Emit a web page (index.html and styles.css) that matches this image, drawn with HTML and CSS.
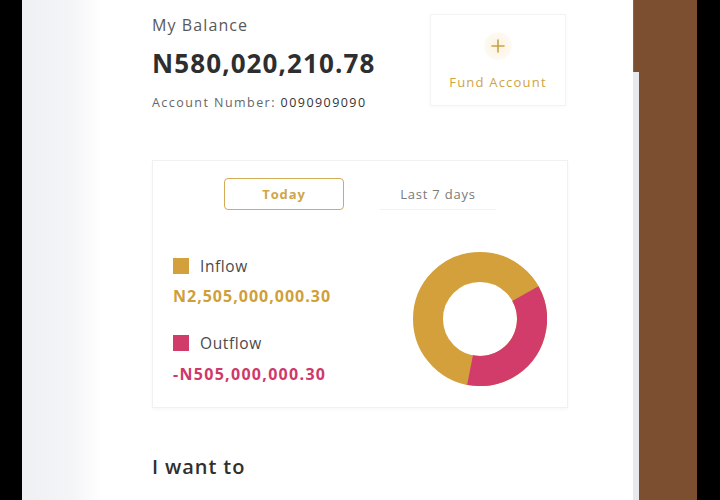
FILE: index.html
```html
<!DOCTYPE html>
<html lang="en">
<head>
<meta charset="utf-8">
<title>Dashboard</title>
<link rel="stylesheet" href="styles.css">
</head>
<body>
<div class="frame">
  <div class="bezel-left"></div>
  <div class="screen">
    <div class="screen-main">
      <div class="balance-row">
        <div class="balance-info">
          <div class="balance-label">My Balance</div>
          <div class="balance-amount">N580,020,210.78</div>
          <div class="account">Account Number: <span class="account-no">0090909090</span></div>
        </div>
        <div class="fund-card">
          <div class="fund-icon">
            <svg width="14" height="14" viewBox="0 0 14 14"><path d="M7 1v12M1 7h12" stroke="#c9a24a" stroke-width="1.6" stroke-linecap="round"/></svg>
          </div>
          <div class="fund-label">Fund Account</div>
        </div>
      </div>

      <div class="chart-card">
        <div class="tabs">
          <div class="tab tab-active">Today</div>
          <div class="tab">Last 7 days</div>
        </div>
        <div class="chart-body">
          <div class="legend">
            <div class="legend-item">
              <span class="swatch swatch-in"></span><span class="legend-name">Inflow</span>
            </div>
            <div class="legend-amount amount-in">N2,505,000,000.30</div>
            <div class="legend-item legend-item-second">
              <span class="swatch swatch-out"></span><span class="legend-name">Outflow</span>
            </div>
            <div class="legend-amount amount-out">-N505,000,000.30</div>
          </div>
          <svg class="donut" width="134" height="134" viewBox="0 0 134 134">
            <circle cx="67" cy="67" r="52" fill="none" stroke="#d4a03b" stroke-width="30"/>
            <circle cx="67" cy="67" r="52" fill="none" stroke="#d23c6a" stroke-width="30" stroke-dasharray="118.1 400" transform="rotate(-29.3 67 67)"/>
          </svg>
        </div>
      </div>

      <div class="section-title">I want to</div>
    </div>
    <div class="screen-edge">
      <div class="edge-top"></div>
    </div>
  </div>
  <div class="bezel-right"></div>
</div>
</body>
</html>
```
FILE: styles.css
```css
html, body {
  margin: 0;
  padding: 0;
  background: #000;
}
body {
  width: 720px;
  height: 500px;
  overflow: hidden;
  font-family: "Open Sans", "Liberation Sans", sans-serif;
}
.frame {
  display: flex;
  width: 720px;
  height: 500px;
}
.bezel-left {
  width: 22px;
  flex: none;
  background: #000;
}
.screen {
  width: 617px;
  flex: none;
  display: flex;
  background: linear-gradient(to right, #eef0f3 0px, #f4f5f7 50px, #fbfbfc 68px, #ffffff 80px);
}
.screen-main {
  flex: 1;
  padding: 14px 0 0 130px;
  box-sizing: border-box;
}
.screen-edge {
  width: 6px;
  flex: none;
  background: #e7e9ec;
}
.edge-top {
  height: 72px;
  background: #7b4f2f;
  box-shadow: inset 1px 0 0 #6d6d6d;
}
.bezel-right {
  width: 58px;
  flex: none;
  background: #7b4f2f;
}

.balance-row {
  display: flex;
  width: 414px;
  height: 92px;
  justify-content: space-between;
}
.balance-info {
  padding-top: 1px;
}
.balance-label {
  font-size: 16px;
  line-height: 20px;
  color: #595959;
  letter-spacing: 1.1px;
}
.balance-amount {
  margin-top: 12px;
  font-size: 26px;
  line-height: 32px;
  font-weight: 700;
  color: #2e2e2e;
  letter-spacing: 1.1px;
}
.account {
  margin-top: 16px;
  font-size: 12.5px;
  line-height: 16px;
  color: #666;
  letter-spacing: 1.45px;
  white-space: nowrap;
}
.account-no {
  color: #333;
}
.fund-card {
  width: 136px;
  height: 92px;
  box-sizing: border-box;
  background: #fff;
  border: 1px solid #f3f3f5;
  box-shadow: 0 1px 4px rgba(0,0,0,0.03);
  display: flex;
  flex-direction: column;
  align-items: center;
}
.fund-icon {
  margin-top: 17px;
  width: 28px;
  height: 28px;
  border-radius: 50%;
  background: radial-gradient(circle, #fbf3df 0, #fdf9f0 60%, #fff 100%);
  display: flex;
  align-items: center;
  justify-content: center;
}
.fund-label {
  margin-top: 14px;
  font-size: 13px;
  line-height: 16px;
  color: #cfa443;
  letter-spacing: 1.2px;
}

.chart-card {
  margin-top: 54px;
  width: 416px;
  height: 248px;
  box-sizing: border-box;
  background: #fff;
  border: 1px solid #f1f1f4;
  box-shadow: 0 2px 4px rgba(0,0,0,0.03);
  padding-top: 17px;
}
.tabs {
  display: flex;
  justify-content: center;
  gap: 36px;
}
.tab {
  width: 116px;
  height: 32px;
  box-sizing: border-box;
  display: flex;
  align-items: center;
  justify-content: center;
  font-size: 13px;
  letter-spacing: 0.8px;
  color: #7a7a7a;
  border-bottom: 1px solid #f2f2f4;
}
.tab-active {
  width: 120px;
  border: 1.5px solid #d2ab56;
  border-radius: 4px;
  color: #d0a648;
  font-weight: 700;
  letter-spacing: 0.9px;
}
.chart-body {
  display: flex;
  justify-content: space-between;
  align-items: flex-start;
  padding: 0 20px 0 20px;
  margin-top: 42px;
}
.legend {
  display: flex;
  flex-direction: column;
  margin-top: 5px;
}
.legend-item {
  display: flex;
  align-items: center;
  height: 18px;
}
.legend-item-second {
  margin-top: 29px;
}
.swatch {
  width: 16px;
  height: 16px;
  margin-right: 11px;
}
.swatch-in { background: #d4a03b; }
.swatch-out { background: #d23c6a; }
.legend-name {
  font-size: 15.5px;
  color: #4a4a4a;
  letter-spacing: 0.6px;
}
.legend-amount {
  font-size: 16px;
  line-height: 18px;
  font-weight: 700;
  white-space: nowrap;
}
.amount-in { color: #cf9f3a; letter-spacing: 1px; margin-top: 12px; }
.amount-out { color: #d0386a; letter-spacing: 1.3px; margin-top: 13px; }
.donut {
  display: block;
}

.section-title {
  margin-top: 47px;
  font-size: 20px;
  line-height: 24px;
  font-weight: 600;
  color: #2f2f2f;
  letter-spacing: 0.9px;
}
```
